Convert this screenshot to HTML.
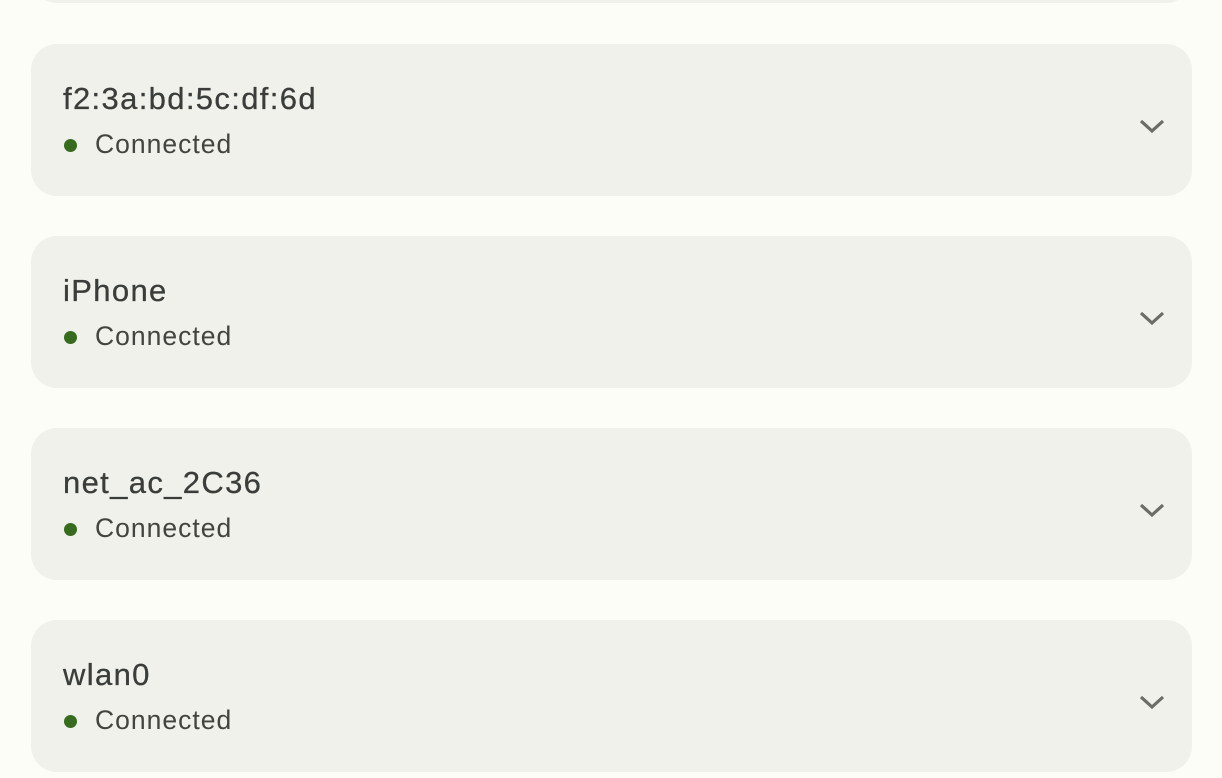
<!DOCTYPE html>
<html><head><style>
html,body{margin:0;padding:0;background:#fcfdf6;width:1222px;height:778px;overflow:hidden;font-family:"Liberation Sans",sans-serif;}
.card{position:absolute;left:31px;width:1161px;height:152px;background:#eff1ea;border-radius:26px;}
.t{position:absolute;left:32px;top:37px;font-size:31px;letter-spacing:1.35px;color:#3a3d3a;line-height:36px;-webkit-text-stroke:0.3px #3a3d3a;}
.s{position:absolute;left:64px;top:84px;font-size:26.5px;letter-spacing:1px;color:#42453f;line-height:32px;}
.d{position:absolute;left:33px;top:95px;width:13px;height:13px;border-radius:50%;background:#376b1e;}
.c{position:absolute;left:1108px;top:74px;}
</style></head><body>
<div class="card" style="top:-149px"></div>
<div class="card" style="top:44px"><div class="t">f2:3a:bd:5c:df:6d</div><div class="d"></div><div class="s">Connected</div><svg class="c" width="26" height="18" viewBox="0 0 26 18"><path d="M2 3 L13 13 L24 3" fill="none" stroke="#6b6d68" stroke-width="3.2"/></svg></div>
<div class="card" style="top:236px"><div class="t">iPhone</div><div class="d"></div><div class="s">Connected</div><svg class="c" width="26" height="18" viewBox="0 0 26 18"><path d="M2 3 L13 13 L24 3" fill="none" stroke="#6b6d68" stroke-width="3.2"/></svg></div>
<div class="card" style="top:428px"><div class="t">net_ac_2C36</div><div class="d"></div><div class="s">Connected</div><svg class="c" width="26" height="18" viewBox="0 0 26 18"><path d="M2 3 L13 13 L24 3" fill="none" stroke="#6b6d68" stroke-width="3.2"/></svg></div>
<div class="card" style="top:620px"><div class="t">wlan0</div><div class="d"></div><div class="s">Connected</div><svg class="c" width="26" height="18" viewBox="0 0 26 18"><path d="M2 3 L13 13 L24 3" fill="none" stroke="#6b6d68" stroke-width="3.2"/></svg></div>
</body></html>
